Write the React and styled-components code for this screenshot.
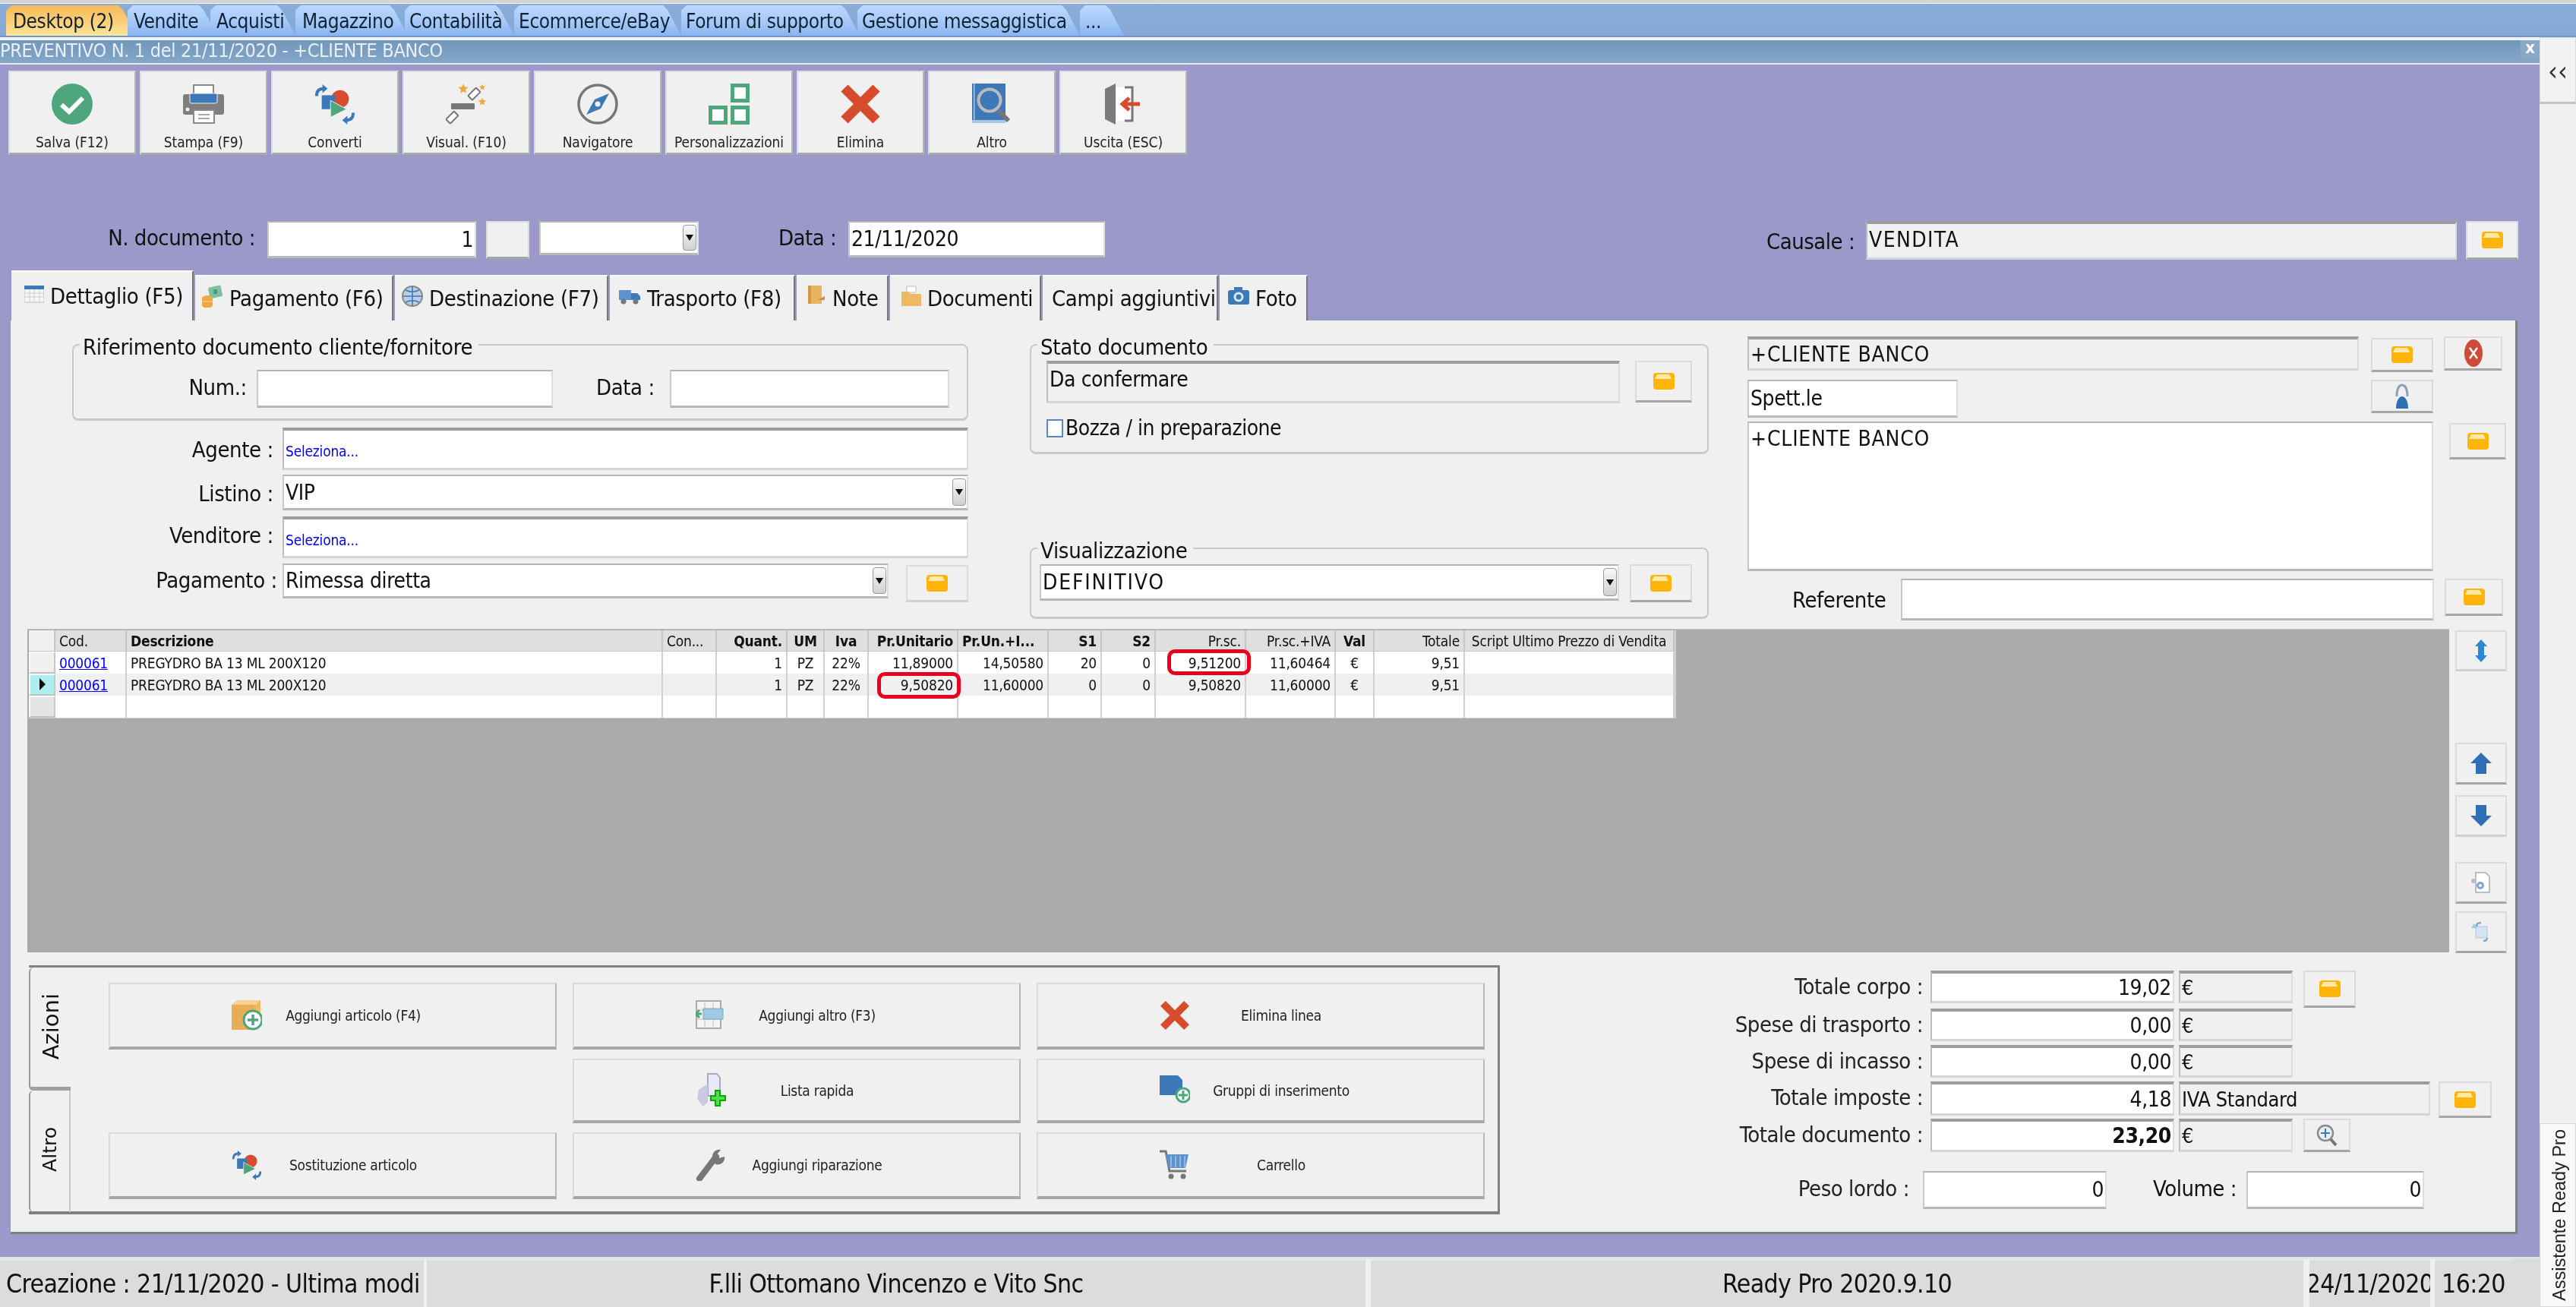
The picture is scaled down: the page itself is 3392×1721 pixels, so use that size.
import React from 'react';
import styled, { createGlobalStyle } from 'styled-components';

const Global = createGlobalStyle`
  html, body { margin: 0; padding: 0; width: 3392px; height: 1721px; overflow: hidden; background: #f0f0f0; }
  body { font-family: "DejaVu Sans Condensed", "DejaVu Sans", sans-serif; color: #111; }
  #root { width: 3392px; height: 1721px; }
  * { box-sizing: border-box; }
`;

const Page = styled.div`
  width: 3392px; height: 1721px; display: flex; flex-direction: column; background: #f0f0f0; filter: blur(0.6px);
`;
const TopStrip = styled.div`
  height: 5px; flex: none; background: #d4d4d4; border-bottom: 1px solid #f4f4f4;
`;
const MenuBar = styled.div`
  height: 44px; flex: none; display: flex; align-items: flex-end; padding-left: 8px;
  background: linear-gradient(#8aacd9, #86a8d6); border-bottom: 2px solid #6b97d8;
`;
const MenuTab = styled.div`
  width: ${p => p.$w}px; margin-left: ${p => p.$ml || 0}px; height: 40px; flex: none; display: flex; align-items: center;
  padding: 2px 0 0 ${p => p.$pl || 8}px; font-size: 26px; letter-spacing: -0.4px; color: #123; white-space: nowrap;
  clip-path: polygon(0 100%, 0 7px, 7px 0, calc(100% - 24px) 0, calc(100% - 18px) 6px, 100% 100%);
  background: ${p => p.$on ? 'linear-gradient(#f5b95c, #fbd27a 60%, #fde49a)' : 'linear-gradient(#bcd8ff, #a7caf9 50%, #8ab5f0)'};
`;
const Body = styled.div`
  flex: 1; min-height: 0; display: flex;
`;
const Workspace = styled.div`
  width: 3344px; flex: none; display: flex; flex-direction: column; background: #9a99c9;
`;
const TitleBar = styled.div`
  height: 36px; flex: none; display: flex; justify-content: space-between; align-items: flex-start;
  background: linear-gradient(#7097bc, #85a7c7); border-top: 4px solid #f2f4f8; border-bottom: 2px solid #e8e8f0;
  color: #e9eff6; font-size: 25px; line-height: 27px; letter-spacing: -0.3px;
`;
const CloseX = styled.div`
  width: 25px; height: 24px; background: #89a9c9; color: #fff; font-size: 22px; font-weight: bold; line-height: 20px; text-align: center;
`;
const Toolbar = styled.div`
  display: flex; gap: 5px; padding: 8px 0 0 11px; flex: none;
`;
const ToolButton = styled.div`
  width: 168px; height: 111px; display: flex; flex-direction: column; align-items: center; padding-top: 15px;
  background: #f0f0f0; border: 2px solid #dcdce4; border-bottom: 3px solid #a8a8a8; border-right-color: #b4b4b4;
  font-size: 19px; letter-spacing: -0.1px; color: #222;
  span { margin-top: 12px; white-space: nowrap; }
  svg { flex: none; }
`;
const DocRow = styled.div`
  display: flex; align-items: flex-start; flex: none; margin-top: 87px; padding-left: 141px; height: 51px;
`;
const DocLabel = styled.div`
  width: ${p => p.$w}px; margin-left: ${p => p.$ml || 0}px; margin-top: ${p => p.$mt ?? 5}px; flex: none;
  font-size: 29px; letter-spacing: -0.5px; white-space: nowrap; text-align: right; color: #111;
`;
const Field = styled.div`
  position: relative;
  width: ${p => p.$w}px; height: ${p => p.$h}px; margin-left: ${p => p.$ml || 0}px; flex: none;
  display: flex; align-items: ${p => p.$top ? 'flex-start' : 'center'}; justify-content: ${p => p.$right ? 'flex-end' : 'flex-start'};
  padding: ${p => p.$top ? '4px 2px 0' : p.$right ? '0 2px' : '0 2px'};
  background: ${p => p.$gray ? '#f0f0f0' : '#fff'};
  border-top: ${p => p.$sunk ? '4px solid #9c9c9c' : '2px solid #b4b4b4'};
  border-left: 2px solid ${p => p.$sunk ? '#bdbdbd' : '#c8c8c8'};
  border-right: 2px solid #dcdce2;
  border-bottom: 3px solid ${p => p.$sunk ? '#d4d4da' : '#b8b8b8'};
  font-size: ${p => p.$fs || 28}px; font-weight: ${p => p.$bold ? 'bold' : 'normal'}; letter-spacing: ${p => p.$ls ?? -0.4}px; white-space: nowrap; color: #111;
`;
const LinkText = styled.span`
  font-size: 19px; color: #0000ee; letter-spacing: -0.2px; padding-top: 5px;
`;
const ComboArrow = styled.div`
  position: absolute; right: 1px; top: 3px; bottom: 3px; width: 18px; border-radius: 4px; border: 1px solid #999;
  background: linear-gradient(#f8f8f8, #d0d0d0); display: flex; align-items: center; justify-content: center;
  &::after { content: ""; border-left: 5px solid transparent; border-right: 5px solid transparent; border-top: 8px solid #111; }
`;
const Btn = styled.div`
  width: ${p => p.$w}px; height: ${p => p.$h}px; margin-left: ${p => p.$ml || 0}px; margin-top: ${p => p.$mt || 0}px; flex: none;
  display: flex; align-items: center; justify-content: center; background: #f0f0f0;
  border: 2px solid #dadae0; border-bottom: 3px solid ${p => p.$flat ? '#cfcfd6' : '#a6a6a6'};
`;
const PageTabs = styled.div`
  display: flex; align-items: flex-end; gap: 2px; margin-top: 14px; padding-left: 15px; height: 66px; flex: none;
`;
const PageTab = styled.div`
  width: ${p => p.$w}px; height: ${p => p.$on ? 66 : 60}px; flex: none; display: flex; align-items: center; gap: 8px; padding: 0 0 0 ${p => p.$pl}px;
  background: #f0f0f0; border-top: 2px solid #fff; border-right: 2px solid #777;
  font-size: 29px; letter-spacing: -0.35px; white-space: nowrap; color: #111;
  svg { flex: none; margin-bottom: 6px; }
`;
const Panel = styled.div`
  margin-left: 14px; width: 3301px; height: 1203px; flex: none; display: flex; flex-direction: column;
  background: #f0f0f0; border-right: 3px solid #808080; border-bottom: 3px solid #808080; padding-top: 21px;
`;
const Upper = styled.div`
  display: flex; padding-left: 81px; height: 372px; flex: none;
`;
const ColLeft = styled.div`
  width: 1180px; flex: none; display: flex; flex-direction: column;
`;
const ColMid = styled.div`
  width: 894px; margin-left: 81px; flex: none; display: flex; flex-direction: column; justify-content: space-between;
`;
const ColRight = styled.div`
  width: 999px; margin-left: 51px; flex: none; display: flex; flex-direction: column;
`;
const Group = styled.fieldset`
  margin: 0; padding: 0; height: ${p => p.$h}px; border: 2px solid #c9c9c9; border-radius: 8px; border-bottom-width: 3px; min-width: 0;
  display: block;
`;
const GroupTitle = styled.legend`
  margin-left: 8px; padding: 0 8px 0 4px; font-size: 29px; line-height: 22px; letter-spacing: -0.3px; color: #111; white-space: nowrap;
  transform: translateY(3px);
`;
const GroupRow = styled.div`
  display: flex; align-items: flex-start; padding-top: ${p => p.$pt || 0}px; padding-left: ${p => p.$pl || 0}px;
`;
const FormRow = styled.div`
  display: flex; align-items: flex-start; margin-top: ${p => p.$mt || 0}px;
`;
const FormLabel = styled.div`
  width: ${p => p.$w || 265}px; margin-right: ${p => p.$mr ?? 12}px; margin-left: ${p => p.$ml || 0}px; margin-top: ${p => p.$mt ?? 8}px; flex: none;
  font-size: 29px; letter-spacing: -0.4px; text-align: right; white-space: nowrap; color: #111;
`;
const CheckRow = styled.div`
  display: flex; align-items: center; gap: 3px; margin: 16px 0 0 20px; font-size: 28px; letter-spacing: -0.5px; white-space: nowrap;
`;
const CheckBox = styled.div`
  width: 22px; height: 24px; background: #fff; border: 2px solid #5f86b4;
`;
const GridArea = styled.div`
  display: flex; margin-top: 13px; padding-left: 22px; flex: none;
`;
const GrayBox = styled.div`
  width: 3189px; height: 426px; flex: none; background: #aaa; padding: 1px 0 0 2px; border-top: 1px solid #c4c4c4;
`;
const SideButtons = styled.div`
  display: flex; flex-direction: column; margin-left: 8px; flex: none;
`;
const GridTable = styled.table`
  border-collapse: separate; border-spacing: 0; table-layout: fixed; width: 2167px; background: #fff; font-size: 19px; border-bottom: 1px solid #d0d0d0; border-right: 2px solid #d0d0d0;
`;
const HeadCell = styled.th`
  height: 28px; padding: 0 5px; background: #dfdfdf; font-weight: ${p => p.$bold ? 'bold' : 'normal'}; text-align: ${p => p.$al || 'left'};
  border-right: 2px solid #c6c6c6; border-bottom: 1px solid #c6c6c6; white-space: nowrap; overflow: hidden; color: #111; letter-spacing: -0.2px;
`;
const Cell = styled.td`
  position: relative; height: 29px; padding: 0 5px; background: ${p => p.$alt ? '#f0f0f0' : '#fff'}; text-align: ${p => p.$al || 'left'};
  border-right: 2px solid #d0d0d0; white-space: nowrap; color: #111; letter-spacing: -0.2px;
`;
const Indicator = styled.td`
  height: 29px; padding: 0; background: ${p => p.$bg}; border: 2px solid #f8f8f8; border-right-color: #c8c8c8; border-bottom-color: #c0c0c0;
  text-align: center; line-height: 16px;
`;
const RowArrow = styled.span`
  display: inline-block; border-top: 8px solid transparent; border-bottom: 8px solid transparent; border-left: 8px solid #111;
`;
const CornerHead = styled.th`
  background: #f0f0f0; border-right: 2px solid #c6c6c6; border-bottom: 1px solid #c6c6c6; padding: 0;
`;
const CodeLink = styled.span`
  color: #0000ee; text-decoration: underline;
`;
const Ring = styled.div`
  position: absolute; z-index: 2; left: ${p => p.$l}px; right: ${p => p.$r}px; top: ${p => p.$t}px; bottom: ${p => p.$b}px;
  border: 5px solid #e8001e; border-radius: 10px; pointer-events: none;
`;
const Lower = styled.div`
  display: flex; margin-top: 16px; padding-left: 24px; flex: none;
`;
const Actions = styled.div`
  width: 1937px; height: 328px; flex: none; display: flex; border-top: 3px solid #808080; border-right: 3px solid #808080; border-bottom: 4px solid #808080;
`;
const VTabs = styled.div`
  width: 55px; flex: none; display: flex; flex-direction: column;
`;
const VTab = styled.div`
  height: ${p => p.$h}px; flex: none; display: flex; align-items: flex-start; justify-content: center; padding-top: ${p => p.$pt}px;
  border-left: 2px solid #999; border-right: ${p => p.$on ? 'none' : '2px solid #c8c8c8'}; border-bottom: ${p => p.$on ? '5px solid #a0a0a0' : 'none'};
  border-radius: 6px 0 0 6px;
  span { writing-mode: vertical-rl; transform: rotate(180deg); font-family: "DejaVu Sans", sans-serif; font-size: ${p => p.$on ? 29 : 25}px; letter-spacing: 0; color: #111; white-space: nowrap; }
`;
const ActionGrid = styled.div`
  display: grid; grid-template-columns: repeat(3, 590px); grid-template-rows: 88px 85px 88px; column-gap: 21px; row-gap: 12px; padding: 20px 0 0 50px;
`;
const ActionBtn = styled.div`
  grid-column: ${p => p.$col}; grid-row: ${p => p.$row};
  display: grid; grid-template-columns: 160px 40px 240px 1fr; align-items: center; background: #f0f0f0;
  border: 2px solid #dadae0; border-bottom: 4px solid #a6a6a6; border-right-color: #b8b8b8; font-size: 19px; letter-spacing: -0.3px; color: #222;
  svg { grid-column: 2; }
  span { grid-column: 3; text-align: center; white-space: nowrap; }
`;
const Totals = styled.div`
  width: 1050px; margin-left: 257px; padding-top: 7px; flex: none; display: flex; flex-direction: column;
`;
const TotalRow = styled.div`
  display: flex; align-items: flex-start; height: ${p => p.$h}px; flex: none;
`;
const TotalLabel = styled.div`
  width: ${p => p.$w || 300}px; flex: none; margin: ${p => p.$mt ?? 4}px 10px 0 0; font-size: 29px; letter-spacing: -0.45px; text-align: right; white-space: nowrap; color: #222;
`;
const WeightRow = styled.div`
  display: flex; align-items: flex-start; margin-top: 25px;
`;
const StatusBar = styled.div`
  display: flex; margin-top: auto; height: 66px; flex: none; background: #f0f0f0; border-top: 3px solid #e4e4e4;
`;
const StatusCell = styled.div`
  width: ${p => p.$w}px; margin-left: ${p => p.$ml || 0}px; flex: none; display: flex; align-items: center; justify-content: ${p => p.$left ? 'flex-start' : 'center'};
  overflow: hidden; background: #dcdcdc; border-top: 2px solid #e6e6e6; padding-left: ${p => p.$left ? 8 : 0}px;
  font-size: 33.5px; letter-spacing: -0.6px; color: #111;
  span { white-space: nowrap; flex: none; }
`;
const StatusFill = styled.div`
  flex: 1; background: #dcdcdc;
`;
const Sidebar = styled.div`
  flex: 1; display: flex; flex-direction: column; justify-content: space-between; background: #f0f0f0;
`;
const Collapse = styled.div`
  height: 88px; display: flex; align-items: center; justify-content: center; background: #f2f2f2; border: 1px solid #dcdce0; border-bottom: 3px solid #c4c4c4;
  font-size: 36px; line-height: 36px; color: #333; padding-top: 4px;
`;
const AssistTab = styled.div`
  height: 242px; display: flex; align-items: center; justify-content: center; padding-left: 4px; background: #f8f8f8; border: 1px solid #d8d8d8;
  span { writing-mode: vertical-rl; transform: rotate(180deg); font-family: "Liberation Sans", sans-serif; font-size: 23.5px; color: #222; white-space: nowrap; }
`;

/* ---------- drawings ---------- */
const S = ({ w = 54, h = 54, vb, children }) => (
  <svg width={w} height={h} viewBox={vb || `0 0 ${w} ${h}`} xmlns="http://www.w3.org/2000/svg">{children}</svg>
);
const starPoints = (cx, cy, r) => Array.from({ length: 10 }, (_, i) => {
  const a = -Math.PI / 2 + i * Math.PI / 5;
  const q = i % 2 ? r * 0.45 : r;
  return `${(cx + q * Math.cos(a)).toFixed(1)},${(cy + q * Math.sin(a)).toFixed(1)}`;
}).join(' ');
const IcoSave = () => <S><circle cx="27" cy="27" r="27" fill="#4fa67c"/><path d="M13 28l10 9 18-18" fill="none" stroke="#fff" strokeWidth="6"/></S>;
const IcoPrint = () => <S>
  <rect x="14" y="2" width="26" height="14" fill="#fff" stroke="#8a8a8a" strokeWidth="2"/>
  <rect x="0" y="14" width="54" height="27" rx="3" fill="#7e7e7e"/>
  <rect x="9" y="13" width="36" height="13" rx="2" fill="#3d78b8" stroke="#f0f0f0" strokeWidth="1"/>
  <circle cx="6" cy="34" r="2.5" fill="#eee"/>
  <rect x="14" y="35" width="27" height="17" fill="#fff" stroke="#8a8a8a" strokeWidth="2"/>
  <path d="M20 41h15M20 46h15" stroke="#aaa" strokeWidth="2"/>
</S>;
const IcoConvert = ({ s = 54 }) => <S w={s} h={s} vb="0 0 56 54">
  <circle cx="35" cy="20" r="12" fill="#d64c2c"/>
  <rect x="10" y="15" width="18" height="19" fill="#3d78b8"/>
  <path d="M22 22l22 12-22 11z" fill="#4fa67c" stroke="#f0f0f0" strokeWidth="1"/>
  <path d="M3 16c0-7 3-10 9-10" fill="none" stroke="#3d78b8" strokeWidth="4"/><path d="M11 0l7 6-7 6z" fill="#3d78b8"/>
  <path d="M53 39c0 7-3 10-9 10" fill="none" stroke="#3d78b8" strokeWidth="4"/><path d="M45 43l-7 6 7 6z" fill="#3d78b8"/>
</S>;
const IcoWand = () => <S>
  <rect x="7" y="26" width="31" height="8" rx="1" fill="#777"/>
  <rect x="30" y="10" width="15" height="8" rx="1" transform="rotate(-45 37 14)" fill="#fff" stroke="#777" strokeWidth="2"/>
  <rect x="1" y="41" width="15" height="8" rx="1" transform="rotate(-45 8 45)" fill="#fff" stroke="#777" strokeWidth="2"/>
  <polygon points={starPoints(23, 7, 7)} fill="#efa73f"/>
  <polygon points={starPoints(48, 5, 4.5)} fill="#efa73f"/>
  <polygon points={starPoints(48, 24, 5.5)} fill="#efa73f"/>
</S>;
const IcoCompass = () => <S>
  <circle cx="27" cy="27" r="25" fill="none" stroke="#777" strokeWidth="3.500"/>
  <path d="M42 13L31 33 12 41 23 21z" fill="#3d78b8"/><circle cx="27" cy="27" r="3.500" fill="#eef"/>
</S>;
const IcoBlocks = () => <S>
  <g fill="#fff" stroke="#4fa67c" strokeWidth="5">
    <rect x="31.500" y="2.500" width="20" height="20"/><rect x="2.500" y="31.500" width="20" height="20"/><rect x="31.500" y="31.500" width="20" height="20"/>
  </g>
</S>;
const IcoX = ({ w = 54, h = 54 }) => <S w={w} h={h} vb="0 0 54 54"><path d="M6 6l42 42M48 6L6 48" stroke="#d64c2c" strokeWidth="13" fill="none"/></S>;
const IcoBook = () => <S>
  <rect x="1" y="0" width="44" height="52" fill="#3d78b8"/><rect x="1" y="48" width="44" height="4" fill="#a9c5e3"/><rect x="3" y="0" width="1.500" height="50" fill="#a9c5e3"/>
  <path d="M36 36l13 13" stroke="#777" strokeWidth="6"/>
  <circle cx="24" cy="22" r="14.500" fill="#3d78b8" stroke="#bbb" strokeWidth="4"/>
</S>;
const IcoExit = () => <S w={50} h={54}>
  <path d="M27 5H37V49H27" fill="#fff" stroke="#777" strokeWidth="3"/>
  <path d="M1 7L15 0V54L1 47z" fill="#7b7b7b"/><rect x="15" y="5" width="12" height="44" fill="#fff"/>
  <path d="M47 27H27M33 19l-9 8 9 8" fill="none" stroke="#d64c2c" strokeWidth="5"/>
</S>;
const IcoFolder = () => <S w={28} h={24}>
  <path d="M4 1h20q4 0 4 4v14q0 4-4 4H4q-4 0-4-4V5q0-4 4-4z" fill="#ffb40a"/><path d="M5 3h16l3 6H2z" fill="#ffe9a8"/>
</S>;
const IcoRedX = () => <S w={24} h={38}><ellipse cx="12" cy="19" rx="12" ry="18" fill="#cf4a38"/><path d="M7 12l10 14M17 12L7 26" stroke="#fff" strokeWidth="2.500"/></S>;
const IcoPerson = () => <S w={22} h={36}><path d="M4 18c0-10 3-15 7-15s7 5 7 15" fill="none" stroke="#8a9fb8" strokeWidth="3"/><path d="M3 34c0-12 5-16 8-16s8 4 8 16z" fill="#2f6fb5"/></S>;
const IcoTable = () => <S w={26} h={23}>
  <rect x="0" y="0" width="26" height="22" fill="#f6f6f6" stroke="#bbb"/><rect x="0" y="0" width="26" height="5" fill="#3d78b8"/>
  <path d="M0 10h26M0 15h26M7 5v17M13 5v17M20 5v17" stroke="#ccc"/>
</S>;
const IcoMoney = () => <S w={28} h={30}>
  <rect x="9" y="2" width="17" height="15" rx="2" fill="#7fc09f" transform="rotate(-12 17 9)"/><rect x="15" y="6" width="5" height="6" fill="#4f9a78"/>
  <ellipse cx="7" cy="18" rx="7" ry="4" fill="#efa73f"/><rect x="0" y="18" width="14" height="9" fill="#efa73f"/><ellipse cx="7" cy="27" rx="7" ry="3.500" fill="#efa73f"/><path d="M0 22h14" stroke="#f8d8a0"/>
</S>;
const IcoGlobe = () => <S w={28} h={28}><circle cx="14" cy="14" r="13" fill="#b9cde3" stroke="#8a8a8a" strokeWidth="2"/><path d="M1 14h26M14 1v26M5 6c6 3 12 3 18 0M5 22c6-3 12-3 18 0" stroke="#3d78b8" strokeWidth="1.500" fill="none"/></S>;
const IcoTruck = () => <S w={30} h={22}><rect x="1" y="3" width="16" height="13" fill="#5d93cc"/><path d="M17 7h8l4 4v5H17z" fill="#3d78b8"/><circle cx="7" cy="18" r="3.500" fill="#777"/><circle cx="23" cy="18" r="3.500" fill="#777"/></S>;
const IcoNote = () => <S w={24} h={28}><path d="M0 0h18v24H0z" fill="#e9b45f"/><path d="M13 19h9v-5l-9 5" fill="#c98f3a"/><path d="M0 0h4v24H0z" fill="#d19b46"/></S>;
const IcoDocs = () => <S w={26} h={28}><path d="M7 1h12v8H7z" fill="#fff" stroke="#bbb"/><path d="M0 8h9l3 3h14v16H0z" fill="#efb862"/></S>;
const IcoCamera = () => <S w={28} h={24}><rect x="0" y="4" width="28" height="19" rx="3" fill="#3d78b8"/><rect x="8" y="0" width="11" height="6" fill="#3d78b8"/><circle cx="14" cy="13" r="6.500" fill="#dbe8f5"/><circle cx="14" cy="13" r="3.500" fill="#3d78b8"/></S>;
const IcoAddBox = () => <S w={40} h={40}>
  <path d="M0 6l8-6h30v28H0z" fill="#efb862"/><path d="M8 0h30l-6 6H0z" fill="#f6d193"/><path d="M0 6h30v33H0z" fill="#e9ad55"/>
  <circle cx="28" cy="26" r="12" fill="#fff" stroke="#4fa67c" strokeWidth="3"/><path d="M28 19v14M21 26h14" stroke="#4fa67c" strokeWidth="3.500"/>
</S>;
const IcoAddGrid = () => <S w={40} h={40}>
  <rect x="1" y="1" width="32" height="36" fill="#f4f4f4" stroke="#aaa" strokeWidth="2"/><path d="M1 13h32M1 25h32M12 1v36M23 1v36" stroke="#bbb"/>
  <rect x="10" y="11" width="26" height="14" fill="#9ec8e4" stroke="#7aa8c8"/><path d="M0 18h8M5 13l-5 5 5 5" stroke="#4fa67c" strokeWidth="3" fill="none"/>
</S>;
const IcoList = () => <S w={40} h={46}>
  <path d="M16 1h12l4 5v24H16z" fill="#e8e8f6" stroke="#aab" strokeWidth="2"/><path d="M4 22l12-8v24L10 44 2 34z" fill="#c9c9e2"/>
  <path d="M29 22v22M19 33h21" stroke="#0a0" strokeWidth="8"/><path d="M29 24v18M21 33h17" stroke="#4fdc4f" strokeWidth="4"/>
</S>;
const IcoGroup = () => <S w={40} h={40}>
  <path d="M0 0h24l6 6v20H0z" fill="#3d78b8"/><circle cx="31" cy="26" r="9" fill="#fff" stroke="#4fa67c" strokeWidth="3"/><path d="M31 20v12M25 26h12" stroke="#4fa67c" strokeWidth="3"/>
</S>;
const IcoWrench = () => <S w={40} h={42}><path d="M5 39L27 10" stroke="#777" strokeWidth="8" strokeLinecap="round"/><path d="M22 10c0-6 5-10 11-9l-5 6 3 5 7-2c1 7-5 12-12 10z" fill="#777"/></S>;
const IcoCart = () => <S w={40} h={40}>
  <path d="M0 2h8l5 26h22" fill="none" stroke="#777" strokeWidth="3"/><path d="M8 6h30l-4 18H12z" fill="#5d93cc"/><path d="M15 8v15M21 8v15M27 8v15M33 8v15" stroke="#a9c5e3" strokeWidth="1.500"/>
  <circle cx="15" cy="35" r="3.500" fill="#777"/><circle cx="31" cy="35" r="3.500" fill="#777"/>
</S>;
const IcoUpDown = () => <S w={20} h={30}><path d="M10 0l8 9h-4v12h4l-8 9-8-9h4V9H2z" fill="#2f86d6"/></S>;
const IcoUp = () => <S w={28} h={28}><path d="M14 0l14 14h-7v14H7V14H0z" fill="#2f6fb5"/></S>;
const IcoDown = () => <S w={28} h={28}><path d="M14 28L0 14h7V0h14v14h7z" fill="#2f6fb5"/></S>;
const IcoDocGear = () => <S w={28} h={28}><path d="M7 1h13l5 5v21H7z" fill="#fff" stroke="#aaa" strokeWidth="1.500"/><circle cx="13" cy="18" r="5" fill="#7fa6cf"/><circle cx="13" cy="18" r="2" fill="#fff"/><circle cx="4" cy="12" r="3" fill="#bbb"/></S>;
const IcoSwap = () => <S w={28} h={28}><rect x="7" y="7" width="15" height="15" fill="#d5e4f2" stroke="#a9c5e3"/><path d="M8 7c0-4 2-5 6-5M22 22c0 3-2 4-5 4" fill="none" stroke="#7fa6cf" strokeWidth="2.500"/><path d="M1 9l4-6 4 6z" fill="#a9c5e3"/></S>;
const IcoZoom = () => <S w={28} h={30}><circle cx="12" cy="12" r="10" fill="#e9eef4" stroke="#8a8a8a" strokeWidth="2.500"/><path d="M12 6v12M6 12h12" stroke="#3d78b8" strokeWidth="2"/><path d="M19 20l7 8" stroke="#777" strokeWidth="4"/></S>;

/* ---------- data ---------- */
const menu = [
  { t: 'Desktop (2)', w: 172, on: true, pl: 9 }, { t: 'Vendite', w: 118, ml: -12, pl: 8 }, { t: 'Acquisti', w: 112, ml: -9, pl: 8 },
  { t: 'Magazzino', w: 148, pl: 9 }, { t: 'Contabilità', w: 144, ml: -4, pl: 6 }, { t: 'Ecommerce/eBay', w: 220, pl: 6 },
  { t: 'Forum di supporto', w: 235, pl: 6 }, { t: 'Gestione messaggistica', w: 293, ml: -3, pl: 6 }, { t: '...', w: 58, pl: 7 },
];
const tools = [
  ['Salva (F12)', IcoSave], ['Stampa (F9)', IcoPrint], ['Converti', IcoConvert], ['Visual. (F10)', IcoWand], ['Navigatore', IcoCompass],
  ['Personalizzazioni', IcoBlocks], ['Elimina', IcoX], ['Altro', IcoBook], ['Uscita (ESC)', IcoExit],
];
const pageTabs = [
  ['Dettaglio (F5)', 240, IcoTable, 17, true], ['Pagamento (F6)', 261, IcoMoney, 9], ['Destinazione (F7)', 281, IcoGlobe, 9], ['Trasporto (F8)', 244, IcoTruck, 11],
  ['Note', 121, IcoNote, 15], ['Documenti', 199, IcoDocs, 15], ['Campi aggiuntivi', 231, null, 12], ['Foto', 116, IcoCamera, 11],
];
const cols = [35, 94, 706, 71, 93, 49, 58, 118, 119, 70, 71, 119, 118, 51, 119, 276];
const heads = [
  ['Cod.'], ['Descrizione', 1], ['Con...'], ['Quant.', 1, 'right'], ['UM', 1, 'center'], ['Iva', 1, 'center'], ['Pr.Unitario', 1, 'right'], ['Pr.Un.+I...', 1],
  ['S1', 1, 'right'], ['S2', 1, 'right'], ['Pr.sc.', 0, 'right'], ['Pr.sc.+IVA', 0, 'right'], ['Val', 1, 'center'], ['Totale', 0, 'right'], ['Script Ultimo Prezzo di Vendita', 0, 'center'],
];
const aligns = heads.map(h => h[2] || (h[0].startsWith('Pr.') ? 'right' : 'left'));
const rows = [
  ['000061', 'PREGYDRO BA 13 ML 200X120', '', '1', 'PZ', '22%', '11,89000', '14,50580', '20', '0', '9,51200', '11,60464', '€', '9,51', ''],
  ['000061', 'PREGYDRO BA 13 ML 200X120', '', '1', 'PZ', '22%', '9,50820', '11,60000', '0', '0', '9,50820', '11,60000', '€', '9,51', ''],
  ['', '', '', '', '', '', '', '', '', '', '', '', '', '', ''],
];
const actions = [
  [1, 1, 'Aggiungi articolo (F4)', IcoAddBox], [2, 1, 'Aggiungi altro (F3)', IcoAddGrid], [3, 1, 'Elimina linea', () => <IcoX w={40} h={40} />],
  [2, 2, 'Lista rapida', IcoList], [3, 2, 'Gruppi di inserimento', IcoGroup],
  [1, 3, 'Sostituzione articolo', () => <IcoConvert s={40} />], [2, 3, 'Aggiungi riparazione', IcoWrench], [3, 3, 'Carrello', IcoCart],
];

export default function App() {
  return (
    <Page>
      <Global />
      <TopStrip />
      <MenuBar>
        {menu.map(m => <MenuTab key={m.t} $w={m.w} $ml={m.ml} $pl={m.pl} $on={m.on}>{m.t}</MenuTab>)}
      </MenuBar>
      <Body>
        <Workspace>
          <TitleBar>
            <span>PREVENTIVO N. 1 del 21/11/2020 - +CLIENTE BANCO</span>
            <CloseX>x</CloseX>
          </TitleBar>
          <Toolbar>
            {tools.map(([t, I]) => <ToolButton key={t}><I /><span>{t}</span></ToolButton>)}
          </Toolbar>
          <DocRow>
            <DocLabel $w={195}>N. documento :</DocLabel>
            <Field $w={275} $h={49} $ml={16} $right>1</Field>
            <Btn $w={57} $h={50} $ml={13} />
            <Field $w={210} $h={45} $ml={13}><ComboArrow /></Field>
            <DocLabel $w={75} $ml={105}>Data :</DocLabel>
            <Field $w={338} $h={48} $ml={17}>21/11/2020</Field>
            <DocLabel $w={114} $ml={871} $mt={10}>Causale :</DocLabel>
            <Field $w={778} $h={51} $ml={17} $gray $sunk $top $ls={1.4}>VENDITA</Field>
            <Btn $w={69} $h={51} $ml={12}><IcoFolder /></Btn>
          </DocRow>
          <PageTabs>
            {pageTabs.map(([t, w, I, pl, on]) => <PageTab key={t} $w={w} $pl={pl} $on={on}>{I && <I />}{t}</PageTab>)}
          </PageTabs>
          <Panel>
            <Upper>
              <ColLeft>
                <Group $h={111}>
                  <GroupTitle>Riferimento documento cliente/fornitore</GroupTitle>
                  <GroupRow $pt={22}>
                    <FormLabel $w={228} $mr={13} $mt={6}>Num.:</FormLabel>
                    <Field $w={390} $h={50} />
                    <FormLabel $w={75} $ml={57} $mr={22} $mt={6}>Data :</FormLabel>
                    <Field $w={368} $h={50} />
                  </GroupRow>
                </Group>
                <FormRow $mt={9}>
                  <FormLabel $mt={12}>Agente :</FormLabel>
                  <Field $w={903} $h={56} $sunk><LinkText>Seleziona...</LinkText></Field>
                </FormRow>
                <FormRow $mt={6}>
                  <FormLabel $mt={8}>Listino :</FormLabel>
                  <Field $w={903} $h={47}>VIP<ComboArrow /></Field>
                </FormRow>
                <FormRow $mt={8}>
                  <FormLabel $mt={8}>Venditore :</FormLabel>
                  <Field $w={903} $h={55} $sunk><LinkText>Seleziona...</LinkText></Field>
                </FormRow>
                <FormRow $mt={7}>
                  <FormLabel $w={270} $mr={7} $mt={5}>Pagamento :</FormLabel>
                  <Field $w={798} $h={46}>Rimessa diretta<ComboArrow /></Field>
                  <Btn $w={82} $h={49} $ml={23} $mt={2} $flat><IcoFolder /></Btn>
                </FormRow>
              </ColLeft>
              <ColMid>
                <Group $h={155}>
                  <GroupTitle>Stato documento</GroupTitle>
                  <GroupRow $pt={10} $pl={20}>
                    <Field $w={755} $h={56} $gray $sunk $top>Da confermare</Field>
                    <Btn $w={75} $h={55} $ml={20}><IcoFolder /></Btn>
                  </GroupRow>
                  <CheckRow><CheckBox />Bozza / in preparazione</CheckRow>
                </Group>
                <Group $h={104}>
                  <GroupTitle>Visualizzazione</GroupTitle>
                  <GroupRow $pt={10} $pl={11}>
                    <Field $w={763} $h={48} $ls={1.8}>DEFINITIVO<ComboArrow /></Field>
                    <Btn $w={82} $h={50} $ml={14}><IcoFolder /></Btn>
                  </GroupRow>
                </Group>
              </ColMid>
              <ColRight>
                <FormRow>
                  <Field $w={805} $h={45} $gray $sunk $ls={0.8}>+CLIENTE BANCO</Field>
                  <Btn $w={82} $h={45} $ml={16} $mt={2}><IcoFolder /></Btn>
                  <Btn $w={77} $h={45} $ml={14}><IcoRedX /></Btn>
                </FormRow>
                <FormRow $mt={10}>
                  <Field $w={277} $h={50}>Spett.le</Field>
                  <Btn $w={82} $h={44} $ml={544}><IcoPerson /></Btn>
                </FormRow>
                <FormRow $mt={5}>
                  <Field $w={903} $h={197} $top $ls={0.8}>+CLIENTE BANCO</Field>
                  <Btn $w={75} $h={48} $ml={21} $mt={2}><IcoFolder /></Btn>
                </FormRow>
                <FormRow $mt={10}>
                  <FormLabel $w={123} $ml={59} $mr={20} $mt={11}>Referente</FormLabel>
                  <Field $w={702} $h={55} />
                  <Btn $w={77} $h={49} $ml={14}><IcoFolder /></Btn>
                </FormRow>
              </ColRight>
            </Upper>
            <GridArea>
              <GrayBox>
                <GridTable>
                  <colgroup>{cols.map((w, i) => <col key={i} width={w} />)}</colgroup>
                  <thead>
                    <tr>
                      <CornerHead />
                      {heads.map(([t, b, al]) => <HeadCell key={t} $bold={b} $al={al}>{t}</HeadCell>)}
                    </tr>
                  </thead>
                  <tbody>
                    {rows.map((r, ri) => (
                      <tr key={ri}>
                        <Indicator $bg={ri === 1 ? '#aeeeee' : ri === 0 ? '#f0f0f0' : '#e4e4e4'}>{ri === 1 ? <RowArrow /> : null}</Indicator>
                        {r.map((c, ci) => (
                          <Cell key={ci} $alt={ri === 1} $al={aligns[ci]}>
                            {ci === 0 && c ? <CodeLink>{c}</CodeLink> : c}
                            {ri === 0 && ci === 10 && <Ring $l={15} $r={-8} $t={-3} $b={-2} />}
                            {ri === 1 && ci === 6 && <Ring $l={11} $r={-5} $t={-2} $b={-4} />}
                          </Cell>
                        ))}
                      </tr>
                    ))}
                  </tbody>
                </GridTable>
              </GrayBox>
              <SideButtons>
                <Btn $w={68} $h={54} $mt={2} $flat><IcoUpDown /></Btn>
                <Btn $w={68} $h={55} $mt={94}><IcoUp /></Btn>
                <Btn $w={68} $h={55} $mt={14} $flat><IcoDown /></Btn>
                <Btn $w={68} $h={55} $mt={33}><IcoDocGear /></Btn>
                <Btn $w={68} $h={55} $mt={10}><IcoSwap /></Btn>
              </SideButtons>
            </GridArea>
            <Lower>
              <Actions>
                <VTabs>
                  <VTab $on $h={162} $pt={34}><span>Azioni</span></VTab>
                  <VTab $h={160} $pt={48}><span>Altro</span></VTab>
                </VTabs>
                <ActionGrid>
                  {actions.map(([c, r, t, I]) => <ActionBtn key={t} $col={c} $row={r}><I /><span>{t}</span></ActionBtn>)}
                </ActionGrid>
              </Actions>
              <Totals>
                <TotalRow $h={50}>
                  <TotalLabel>Totale corpo :</TotalLabel>
                  <Field $w={321} $h={43} $right $sunk $fs={28}>19,02</Field>
                  <Field $w={150} $h={43} $ml={6} $gray $sunk $fs={27}>€</Field>
                  <Btn $w={69} $h={49} $ml={14}><IcoFolder /></Btn>
                </TotalRow>
                <TotalRow $h={48}>
                  <TotalLabel>Spese di trasporto :</TotalLabel>
                  <Field $w={321} $h={43} $right $sunk $fs={28}>0,00</Field>
                  <Field $w={150} $h={43} $ml={6} $gray $sunk $fs={27}>€</Field>
                </TotalRow>
                <TotalRow $h={48}>
                  <TotalLabel>Spese di incasso :</TotalLabel>
                  <Field $w={321} $h={43} $right $sunk $fs={28}>0,00</Field>
                  <Field $w={150} $h={43} $ml={6} $gray $sunk $fs={27}>€</Field>
                </TotalRow>
                <TotalRow $h={49}>
                  <TotalLabel>Totale imposte :</TotalLabel>
                  <Field $w={321} $h={45} $right $sunk $fs={28}>4,18</Field>
                  <Field $w={331} $h={45} $ml={6} $gray $sunk $fs={27}>IVA Standard</Field>
                  <Btn $w={70} $h={48} $ml={11}><IcoFolder /></Btn>
                </TotalRow>
                <TotalRow $h={44}>
                  <TotalLabel>Totale documento :</TotalLabel>
                  <Field $w={321} $h={44} $right $sunk $bold $fs={28}>23,20</Field>
                  <Field $w={150} $h={44} $ml={6} $gray $sunk $fs={27}>€</Field>
                  <Btn $w={62} $h={44} $ml={14}><IcoZoom /></Btn>
                </TotalRow>
                <WeightRow>
                  <TotalLabel $w={282} $mt={6}>Peso lordo :</TotalLabel>
                  <Field $w={242} $h={50} $ml={8} $right $fs={28}>0</Field>
                  <DocLabel $w={111} $ml={60} $mt={6}>Volume :</DocLabel>
                  <Field $w={234} $h={50} $ml={13} $right $fs={28}>0</Field>
                </WeightRow>
              </Totals>
            </Lower>
          </Panel>
          <StatusBar>
            <StatusCell $w={558} $left><span>Creazione : 21/11/2020 - Ultima modi</span></StatusCell>
            <StatusCell $w={1236} $ml={4}><span>F.lli Ottomano Vincenzo e Vito Snc</span></StatusCell>
            <StatusCell $w={1228} $ml={7}><span>Ready Pro 2020.9.10</span></StatusCell>
            <StatusCell $w={159} $ml={8}><span>24/11/2020</span></StatusCell>
            <StatusCell $w={102} $ml={6}><span>16:20</span></StatusCell>
            <StatusFill />
          </StatusBar>
        </Workspace>
        <Sidebar>
          <Collapse>‹‹</Collapse>
          <AssistTab><span>Assistente Ready Pro</span></AssistTab>
        </Sidebar>
      </Body>
    </Page>
  );
}
